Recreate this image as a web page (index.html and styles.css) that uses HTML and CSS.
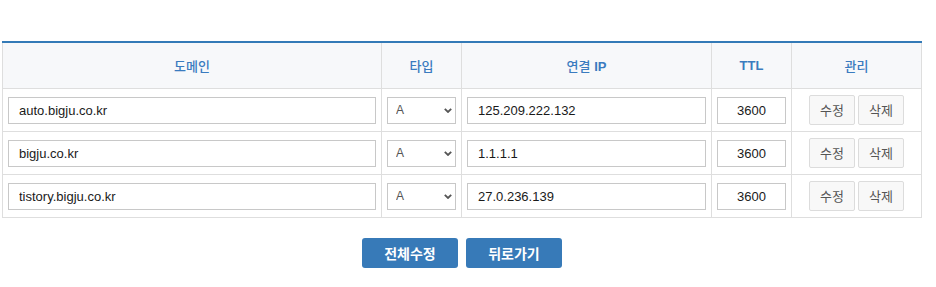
FILE: index.html
```html
<!DOCTYPE html>
<html lang="ko">
<head>
<meta charset="utf-8">
<link rel="stylesheet" href="styles.css">
</head>
<body>
<div class="wrap">
  <table class="dns">
    <colgroup>
      <col class="c-domain"><col class="c-type"><col class="c-ip"><col class="c-ttl"><col class="c-manage">
    </colgroup>
    <thead>
      <tr><th>도메인</th><th>타입</th><th>연결 <span class="en">IP</span></th><th><span class="en">TTL</span></th><th>관리</th></tr>
    </thead>
    <tbody>
      <tr>
        <td><input class="inp" type="text" value="auto.bigju.co.kr"></td>
        <td><select class="sel"><option>A</option></select></td>
        <td><input class="inp" type="text" value="125.209.222.132"></td>
        <td><input class="inp ttl" type="text" value="3600"></td>
        <td><div class="acts"><button class="btn-sm">수정</button><button class="btn-sm">삭제</button></div></td>
      </tr>
      <tr>
        <td><input class="inp" type="text" value="bigju.co.kr"></td>
        <td><select class="sel"><option>A</option></select></td>
        <td><input class="inp" type="text" value="1.1.1.1"></td>
        <td><input class="inp ttl" type="text" value="3600"></td>
        <td><div class="acts"><button class="btn-sm">수정</button><button class="btn-sm">삭제</button></div></td>
      </tr>
      <tr>
        <td><input class="inp" type="text" value="tistory.bigju.co.kr"></td>
        <td><select class="sel"><option>A</option></select></td>
        <td><input class="inp" type="text" value="27.0.236.139"></td>
        <td><input class="inp ttl" type="text" value="3600"></td>
        <td><div class="acts"><button class="btn-sm">수정</button><button class="btn-sm">삭제</button></div></td>
      </tr>
    </tbody>
  </table>
  <div class="bottom">
    <button class="btn-primary">전체수정</button>
    <button class="btn-primary">뒤로가기</button>
  </div>
</div>
</body>
</html>
```
FILE: styles.css
```css
* { box-sizing: border-box; }
html, body { margin: 0; padding: 0; background: #fff; }
body {
  font-family: "Liberation Sans", "Noto Sans CJK KR", sans-serif;
  font-size: 13px;
  color: #333;
}
.wrap {
  padding: 41px 0 0 2px;
  width: 922px;
}
.dns {
  width: 920px;
  table-layout: fixed;
  border-collapse: collapse;
  border-top: 2px solid #337ab7;
}
.c-domain { width: 379px; }
.c-type { width: 80px; }
.c-ip { width: 250px; }
.c-ttl { width: 80px; }
.c-manage { width: 130px; }
.dns th {
  height: 46px;
  background: #f7f8fa;
  color: #3a7bbf;
  font-weight: 500;
  font-size: 13px;
  text-align: center;
  border: 1px solid #dedede;
  border-top: none;
  padding: 0;
}
.dns th .en { font-weight: bold; }
.dns td {
  height: 43px;
  border: 1px solid #dedede;
  padding: 0 5px;
  vertical-align: middle;
}
.inp {
  display: block;
  width: 100%;
  height: 27px;
  margin-top: 1px;
  border: 1px solid #c8c8c8;
  padding: 0 10px;
  font-family: "Liberation Sans", "Noto Sans CJK KR", sans-serif;
  font-size: 13px;
  color: #1a1a1a;
  background: #fff;
  outline: none;
}
.inp.ttl { text-align: center; padding: 0 4px; }
.sel {
  display: block;
  width: 100%;
  height: 27px;
  margin-top: 1px;
  border: 1px solid #c8c8c8;
  border-radius: 0;
  padding: 0 0 0 8px;
  font-family: "Liberation Sans", sans-serif;
  font-size: 12px;
  color: #555;
  background: #fff url("data:image/svg+xml,%3Csvg xmlns='http://www.w3.org/2000/svg' width='8' height='5' viewBox='0 0 8 5'%3E%3Cpath d='M0.8 0.8 L4 4 L7.2 0.8' fill='none' stroke='%23555' stroke-width='1.8'/%3E%3C/svg%3E") no-repeat right 3px center;
  -webkit-appearance: none;
  appearance: none;
}
.acts {
  display: flex;
  justify-content: center;
  gap: 3px;
}
.btn-sm {
  width: 46px;
  height: 30px;
  padding: 0;
  border: 1px solid #dcdcdc;
  border-radius: 2px;
  background: #f8f8f8;
  color: #555;
  font-family: "Noto Sans CJK KR", "Liberation Sans", sans-serif;
  font-size: 13px;
}
.bottom {
  display: flex;
  justify-content: center;
  gap: 8px;
  padding-top: 20px;
}
.btn-primary {
  width: 96px;
  height: 30px;
  padding: 0;
  border: none;
  border-radius: 3px;
  background: #377ab8;
  color: #fff;
  font-family: "Noto Sans CJK KR", "Liberation Sans", sans-serif;
  font-weight: bold;
  font-size: 14px;
}
```
